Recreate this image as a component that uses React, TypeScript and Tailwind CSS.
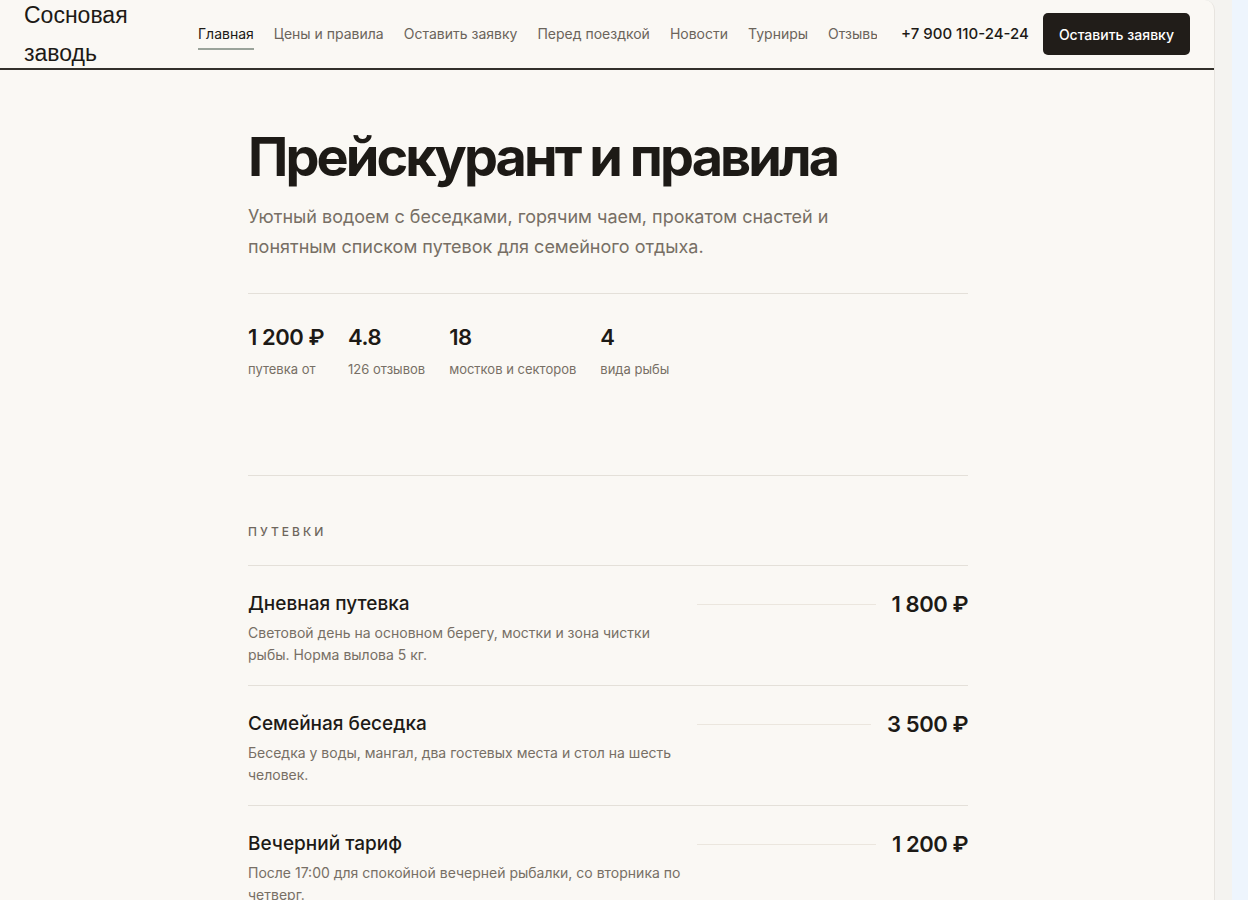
import React from "react";

const navItems = [
  "Главная",
  "Цены и правила",
  "Оставить заявку",
  "Перед поездкой",
  "Новости",
  "Турниры",
  "Отзывы",
];

const stats = [
  { value: "1 200 ₽", label: "путевка от" },
  { value: "4.8", label: "126 отзывов" },
  { value: "18", label: "мостков и секторов" },
  { value: "4", label: "вида рыбы" },
];

const rows = [
  {
    title: "Дневная путевка",
    desc: "Световой день на основном берегу, мостки и зона чистки рыбы. Норма вылова 5 кг.",
    price: "1 800 ₽",
  },
  {
    title: "Семейная беседка",
    desc: "Беседка у воды, мангал, два гостевых места и стол на шесть человек.",
    price: "3 500 ₽",
  },
  {
    title: "Вечерний тариф",
    desc: "После 17:00 для спокойной вечерней рыбалки, со вторника по четверг.",
    price: "1 200 ₽",
  },
  {
    title: "Ночная рыбалка",
    desc: "С 20:00 до 8:00, освещенные мостки и горячий чай в домике.",
    price: "2 400 ₽",
  },
];

export default function App() {
  return (
    <div
      className="flex min-h-screen bg-[#f4f3f0]"
      style={{ fontFamily: "Inter, 'Noto Sans', sans-serif" }}
    >
      <div className="w-[1215px] shrink-0 bg-[#faf8f4] border-r border-[#e7e4df] rounded-tr-[10px] overflow-hidden">
        <header className="h-[70px] flex items-center px-6 border-b-2 border-[#33302b]">
          <div
            className="w-[150px] shrink-0 text-[23px] leading-[38px] text-[#1d1a16]"
            style={{ fontFamily: "'Liberation Sans', Arial, sans-serif" }}
          >
            Сосновая заводь
          </div>
          <nav className="ml-6 flex-1 min-w-0 overflow-hidden">
            <ul className="flex gap-[20px] whitespace-nowrap text-[14px]">
              {navItems.map((item, i) => (
                <li key={item} className="shrink-0">
                  <span
                    className={
                      i === 0
                        ? "block leading-5 text-[#1d1a16] mt-[6px] pb-1 border-b-2 border-[#9aa39a]"
                        : "block leading-5 text-[#6b645b] mt-[6px] pb-1 border-b-2 border-transparent"
                    }
                  >
                    {item}
                  </span>
                </li>
              ))}
            </ul>
          </nav>
          <div className="ml-6 shrink-0 text-[15px] font-medium text-[#1d1a16]">
            +7 900 110-24-24
          </div>
          <button className="ml-[14px] shrink-0 h-[42px] px-4 rounded-[5px] bg-[#211d19] text-white text-[14px] font-medium">
            Оставить заявку
          </button>
        </header>

        <main className="w-[720px] ml-[248px] pt-[57px] pb-20">
          <h1 className="text-[54px] leading-[60px] font-bold tracking-[-0.054em] text-[#1d1a16]">
            Прейскурант и правила
          </h1>
          <p className="mt-[15px] text-[18px] leading-[30px] text-[#776f65] max-w-[600px]">
            Уютный водоем с беседками, горячим чаем, прокатом снастей и понятным
            списком путевок для семейного отдыха.
          </p>

          <section className="mt-[31px] border-t border-[#e4e0d9] pt-[29px] pb-24">
            <div className="flex gap-6">
              {stats.map((s) => (
                <div key={s.label}>
                  <div className="text-[22px] leading-7 font-semibold text-[#1d1a16] tracking-[-0.02em]">
                    {s.value}
                  </div>
                  <div className="mt-2 text-[13px] leading-5 text-[#776f65]">
                    {s.label}
                  </div>
                </div>
              ))}
            </div>
          </section>

          <section className="border-t border-[#e4e0d9] pt-12">
            <div className="text-[12px] leading-4 font-medium tracking-[0.25em] text-[#6e665c] mb-[25px]">
              ПУТЕВКИ
            </div>
            {rows.map((r) => (
              <div
                key={r.title}
                className="flex border-t border-[#e4e0d9] pt-6 pb-[19px]"
              >
                <div className="w-[449px] shrink-0">
                  <div className="text-[19px] leading-7 font-medium text-[#1d1a16]">
                    {r.title}
                  </div>
                  <div className="mt-1 max-w-[440px] text-[14px] leading-[22px] text-[#776f65]">
                    {r.desc}
                  </div>
                </div>
                <div className="flex-1 flex items-center h-7 gap-4">
                  <div className="flex-1 h-px bg-[#ebe6de]" />
                  <div className="text-[22px] leading-7 font-semibold text-[#1d1a16] tracking-[-0.02em] whitespace-nowrap">
                    {r.price}
                  </div>
                </div>
              </div>
            ))}
          </section>
        </main>
      </div>
      <div className="w-[17px] shrink-0 bg-[#f4f3f0]" />
      <div className="flex-1 bg-[#eef5fd]" />
    </div>
  );
}
